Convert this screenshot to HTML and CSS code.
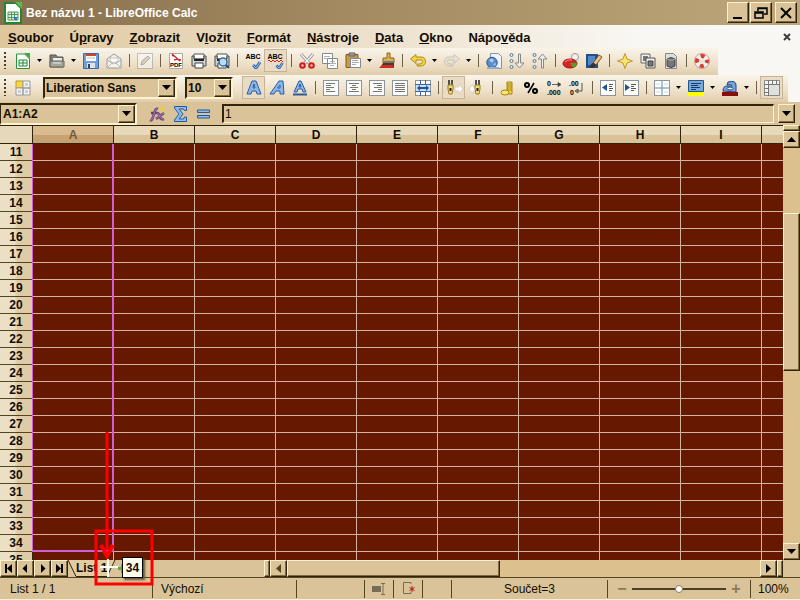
FILE: index.html
```html
<!DOCTYPE html>
<html lang="cs">
<head>
<meta charset="utf-8">
<title>Bez názvu 1 - LibreOffice Calc</title>
<link rel="stylesheet" href="styles.css">
</head>
<body>
<svg class="defs" aria-hidden="true">
  <defs>
    <symbol id="down" viewBox="0 0 9 5"><path d="M0 0h9L4.500 5z"/></symbol>
    <symbol id="caret" viewBox="0 0 5 3"><path d="M0 0h5L2.500 3z"/></symbol>
    <symbol id="page" viewBox="0 0 16 16"><rect x="0.500" y="0.500" width="15" height="15" fill="#fcfcf8" stroke="#8e949c"/></symbol>
    <symbol id="printer" viewBox="0 0 16 16"><path d="M3 1h10v5H3z" fill="#fff" stroke="#555"/><path d="M1 3h2v3h10V3h2v10H1z" fill="#d3d5d3" stroke="#4a4c4c"/><path d="M3 6h10v2H3z" fill="#222"/><path d="M4 10h8v5H4z" fill="#fff" stroke="#444"/></symbol>
    <symbol id="tick" viewBox="0 0 9 8"><path d="M1 4l3 3 4-6" fill="none" stroke="#2f68b0" stroke-width="3"/><path d="M1 4l3 3 4-6" fill="none" stroke="#98c4f0"/></symbol>
    <symbol id="pen" viewBox="0 0 16 16"><path d="M5 0h2v5H5zM8 0h2v5H8z" fill="#505050"/><path d="M5 5h5v4l-1 5H6L5 9z" fill="#f4dd78" stroke="#9a7c20"/><path d="M7.500 8v3" stroke="#222" stroke-width="2"/></symbol>
  </defs>
</svg>
<div class="app">
  <header class="titlebar">
    <svg class="logo" viewBox="0 0 18 22"><path d="M1 1h11l5 5v15H1z" fill="#fff" stroke="#28852f" stroke-width="2"/><path d="M11 0h7v7z" fill="#54c044"/><path d="M4 10h10v8H4z" fill="#dfeee0" stroke="#4c9a54"/><path d="M4 12.500h10M4 15.500h10M7.500 10v8M10.500 10v8" stroke="#4c9a54"/><path d="M10 15h3v3h-3z" fill="#3974a8"/></svg>
    <h1>Bez názvu 1 - LibreOffice Calc</h1>
    <div class="window-buttons">
      <button class="raised" aria-label="Minimalizovat"><svg viewBox="0 0 16 16"><path d="M3 13h9" stroke="#000" stroke-width="2"/></svg></button>
      <button class="raised" aria-label="Obnovit"><svg viewBox="0 0 16 16"><path d="M5 6V3h9v6h-3M5 3.500h9M2 7h8v6H2zM2 8h8" fill="none" stroke="#000" stroke-width="1.500"/></svg></button>
      <button class="raised close" aria-label="Zavřít"><svg viewBox="0 0 16 16"><path d="M3 3l10 10M13 3L3 13" stroke="#000" stroke-width="2"/></svg></button>
    </div>
  </header>

  <div class="bars">
    <nav class="menubar">
      <a href="#"><u>S</u>oubor</a><a href="#">Ú<u>p</u>ravy</a><a href="#"><u>Z</u>obrazit</a><a href="#">V<u>l</u>ožit</a><a href="#"><u>F</u>ormát</a><a href="#"><u>N</u>ástroje</a><a href="#"><u>D</u>ata</a><a href="#"><u>O</u>kno</a><a href="#">Nápo<u>v</u>ěda</a>
      <button class="doc-close" aria-label="Zavřít dokument"><svg viewBox="0 0 8 8"><path d="M1 1l6 6M7 1L1 7" stroke="#3c3c3c" stroke-width="2"/></svg></button>
    </nav>

    <div class="toolbar">
      <i class="grip"></i>
      <button class="tool" aria-label="Nový"><svg viewBox="0 0 16 16"><path d="M1.500 1h8l5 5v9.500h-13z" fill="#fff" stroke="#28943a"/><path d="M9 0h6v6z" fill="#3aad3e"/><path d="M4 7h8v6H4z" fill="#fff" stroke="#1e8a2e"/><path d="M4 10h8M8 7v6" stroke="#1e8a2e"/></svg></button>
      <button class="more" aria-label="Nový – další"><svg><use href="#caret"/></svg></button>
      <button class="tool" aria-label="Otevřít"><svg viewBox="0 0 16 16"><path d="M1 2h6l1 2h6v10H1z" fill="#7b7c72" stroke="#56574f"/><path d="M4 5h9v4H4z" fill="#eee"/><path d="M1 8h14v6H1z" fill="#a5a598" stroke="#66675e"/><path d="M4 10h8" stroke="#eee"/></svg></button>
      <button class="more" aria-label="Otevřít – další"><svg><use href="#caret"/></svg></button>
      <button class="tool" aria-label="Uložit"><svg viewBox="0 0 16 16"><path d="M0.500 0.500h15v15h-15z" fill="#6f9fd8" stroke="#3c6aa8"/><path d="M3 1h10v7H3z" fill="#fff"/><path d="M3 1h10v2H3z" fill="#d8402c"/><path d="M4 5h8" stroke="#bbb"/><path d="M4 10h8v5H4z" fill="#dfe3e8"/><path d="M5 11h2v4H5z" fill="#345"/></svg></button>
      <button class="tool" aria-label="E-mail"><svg viewBox="0 0 16 16"><path d="M1 6l7-5 7 5v9H1z" fill="#f4f4f0" stroke="#9b9b93"/><path d="M1 15l5-5h4l5 5M1 7l6 4M15 7l-6 4" fill="none" stroke="#b4b4ac"/><path d="M4 5h8v3l-4 2-4-2z" fill="#fff" stroke="#bbb"/></svg></button>
      <i class="sep"></i>
      <button class="tool faded" aria-label="Upravit"><svg viewBox="0 0 16 16"><use href="#page"/><path d="M4 12l1-4 6-5 2 2-6 6z" fill="#bbb" stroke="#777"/></svg></button>
      <i class="sep"></i>
      <button class="tool" aria-label="Export do PDF"><svg viewBox="0 0 16 16"><path d="M1.500 0.500h13v15h-13z" fill="#fff" stroke="#b0a8a0"/><path d="M4 1l8 7M6 7l3-1 4 1M4 2l2 1" fill="none" stroke="#d02828" stroke-width="1.500"/><text x="8" y="14" class="t-pdf">PDF</text></svg></button>
      <button class="tool" aria-label="Tisk"><svg><use href="#printer"/></svg></button>
      <button class="tool" aria-label="Náhled"><svg viewBox="0 0 16 16"><use href="#printer"/><circle cx="9" cy="9" r="4" fill="#bcdcf4" stroke="#3b6c9c" stroke-width="1.500"/><path d="M12 12l3 3" stroke="#244c74" stroke-width="2"/></svg></button>
      <i class="sep"></i>
      <button class="tool" aria-label="Kontrola pravopisu"><svg viewBox="0 0 16 16"><text x="8" y="6" class="t-abc">ABC</text><use href="#tick" x="7" y="8" width="9" height="8"/></svg></button>
      <button class="tool on" aria-label="Automatická kontrola"><svg viewBox="0 0 16 16"><text x="7" y="6" class="t-abc">ABC</text><path d="M0 8l1-1 2 2 2-2 2 2 2-2 2 2 2-2 2 2" fill="none" stroke="#d22"/><use href="#tick" x="7" y="9" width="9" height="7"/></svg></button>
      <i class="sep"></i>
      <button class="tool" aria-label="Vyjmout"><svg viewBox="0 0 16 16"><path d="M2 1l8 9M14 1l-8 9" stroke="#8c9094" stroke-width="3"/><path d="M2 1l8 9M14 1l-8 9" stroke="#f4f4f4" stroke-width="1.300"/><circle cx="3.500" cy="12.500" r="2.300" fill="#fbb" stroke="#cc1c1c" stroke-width="2"/><circle cx="12.500" cy="12.500" r="2.300" fill="#fbb" stroke="#cc1c1c" stroke-width="2"/></svg></button>
      <button class="tool" aria-label="Kopírovat"><svg viewBox="0 0 16 16"><path d="M0.500 0.500h10v10h-10zM5.500 5.500h10v10h-10z" fill="#fff" stroke="#85898c"/><path d="M2 3.500h6M2 5.500h3M8 8.500h5M8 10.500h6M8 12.500h4" stroke="#b0b0b0"/></svg></button>
      <button class="tool" aria-label="Vložit"><svg viewBox="0 0 16 16"><path d="M1 1.500h12v13H1z" fill="#c99a4c" stroke="#7c5c24"/><path d="M4 0h6v3H4z" fill="#999" stroke="#666"/><path d="M5.500 5.500h10v9h-10z" fill="#fff" stroke="#85898c"/><path d="M7 7.500h6M7 9.500h7M7 11.500h4" stroke="#aaa"/></svg></button>
      <button class="more" aria-label="Vložit – další"><svg><use href="#caret"/></svg></button>
      <button class="tool" aria-label="Štětec"><svg viewBox="0 0 16 16"><path d="M8 0h3v5h4v5H4V5h4z" fill="#ddb050" stroke="#8c6420"/><path d="M4 8h11v2H4z" fill="#777"/><path d="M4 10h11v5H1z" fill="#4c3824"/><path d="M0 15l3-3h11l1 3z" fill="#d02c2c"/></svg></button>
      <i class="sep"></i>
      <button class="tool" aria-label="Zpět"><svg viewBox="0 0 16 16"><path d="M0.500 6L6 1.500V4h5q4.500 0 4.500 4.500T10 13H7v-2h3q2.500 0 2.500-2.500T10 7H6v3.500z" fill="#f4d448" stroke="#b08c14"/></svg></button>
      <button class="more" aria-label="Zpět – další"><svg><use href="#caret"/></svg></button>
      <button class="tool faded" aria-label="Znovu"><svg viewBox="0 0 16 16"><path d="M15.500 6L10 1.500V4H5Q0.500 4 0.500 8.500T6 13h3v-2H6q-2.500 0-2.500-2.500T6 7h4v3.500z" fill="#dcdcd4" stroke="#a4a49c"/></svg></button>
      <button class="more" aria-label="Znovu – další"><svg><use href="#caret"/></svg></button>
      <i class="sep"></i>
      <button class="tool" aria-label="Odkaz"><svg viewBox="0 0 16 16"><path d="M4.500 0.500h8l3 3v12h-11z" fill="#eef4fa" stroke="#8494a4"/><circle cx="6" cy="9.500" r="5.200" fill="#5b8cc4" stroke="#2c5890"/><path d="M3 7q3-3 5 0l-2 3zM7 11l3-1-1 3z" fill="#a9cdf0"/><path d="M1 14h12v2H1z" fill="#8fb0d0"/></svg></button>
      <button class="tool" aria-label="Seřadit vzestupně"><svg viewBox="0 0 16 16"><g fill="#e4f0fa" stroke="#54789c"><circle cx="2.500" cy="2" r="1.500"/><circle cx="2.500" cy="8" r="1.500"/><circle cx="2.500" cy="14" r="1.500"/></g><path d="M9.500 1h2v9H15l-4.500 5L6 10h3.500z" fill="#eee" stroke="#888"/></svg></button>
      <button class="tool" aria-label="Seřadit sestupně"><svg viewBox="0 0 16 16"><g fill="#e4f0fa" stroke="#54789c"><circle cx="2.500" cy="2" r="1.500"/><circle cx="2.500" cy="8" r="1.500"/><circle cx="2.500" cy="14" r="1.500"/></g><path d="M9.500 15h2V6H15l-4.500-5L6 6h3.500z" fill="#eee" stroke="#888"/></svg></button>
      <i class="sep"></i>
      <button class="tool" aria-label="Graf"><svg viewBox="0 0 16 16"><circle cx="12" cy="4" r="3.500" fill="#eee" stroke="#999"/><ellipse cx="7" cy="10.500" rx="7" ry="4.500" fill="#d82424" stroke="#981818"/><path d="M7 10h7q0 3-4 4.500z" fill="#48a828"/><path d="M2 9q3-3 7-2" stroke="#f88" fill="none"/></svg></button>
      <button class="tool" aria-label="Kreslení"><svg viewBox="0 0 16 16"><path d="M0 1h12v14H0z" fill="#1e508c"/><path d="M2 3h7v9H2z" fill="#5488c0"/><path d="M7 10l6-8 3 2-6 8z" fill="#eac48c" stroke="#75542c"/><path d="M4 15q0-5 4-5l2 2q-1 3-6 3z" fill="#333"/></svg></button>
      <i class="sep"></i>
      <button class="tool" aria-label="Navigátor"><svg viewBox="0 0 16 16"><path d="M8 0.500l2 5.500 5.500 2-5.500 2-2 5.500L6 10 0.500 8 6 6z" fill="#fae46c" stroke="#b8982c"/></svg></button>
      <button class="tool" aria-label="Galerie"><svg viewBox="0 0 16 16"><path d="M1 1h9v9H1z" fill="#eee" stroke="#666"/><path d="M3 3h5v5H3z" fill="#777"/><path d="M6 5h9v10H6z" fill="#eee" stroke="#555"/><path d="M8 8h5v5H8z" fill="#777" stroke="#444"/></svg></button>
      <button class="tool" aria-label="Zdroje dat"><svg viewBox="0 0 16 16"><path d="M2.500 0.500h8l3 3v12h-11z" fill="#ddd" stroke="#888"/><path d="M4 6q4-3 8 0v7q-4 3-8 0z" fill="#777" stroke="#444"/><path d="M4 6q4 3 8 0" fill="none" stroke="#aaa"/></svg></button>
      <i class="sep"></i>
      <button class="tool" aria-label="Nápověda"><svg viewBox="0 0 16 16"><circle cx="8" cy="8" r="5" fill="none" stroke="#eee" stroke-width="5"/><circle cx="8" cy="8" r="5" fill="none" stroke="#d83c34" stroke-width="4" stroke-dasharray="4 3.850" stroke-dashoffset="2"/><circle cx="8" cy="8" r="7.500" fill="none" stroke="#c08078" stroke-width="0.700"/></svg></button>
    </div>

    <div class="toolbar formatting">
      <i class="grip"></i>
      <button class="tool" aria-label="Styly"><svg viewBox="0 0 16 16"><path d="M1 1h7v7H1z" fill="#fbd63c" stroke="#b89830"/><path d="M8 1h7v7H8zM1 8h7v7H1zM8 8h7v7H8z" fill="#f4f4f4" stroke="#999"/><path d="M10 3h3v3h-3zM3 10h3v3H3zM10 10h3v3h-3z" fill="#ccd"/></svg></button>
      <span class="combo font"><select aria-label="Název písma"><option>Liberation Sans</option></select><span class="drop raised"><svg><use href="#down"/></svg></span></span>
      <span class="combo size"><select aria-label="Velikost písma"><option>10</option></select><span class="drop raised"><svg><use href="#down"/></svg></span></span>
      <button class="tool on" aria-label="Tučné"><svg viewBox="0 0 16 16"><path d="M1 14L6 1h4l5 13h-4l-1-3H6l-1 3zM7 8h2L8 4z" fill="#8ab8ec" stroke="#2c5c9c" fill-rule="evenodd"/></svg></button>
      <button class="tool" aria-label="Kurzíva"><svg viewBox="0 0 16 16"><path d="M1 14L10 1h4l1 13h-4v-3H7l-2 3zM8.500 8H11V5z" fill="#8ab8ec" stroke="#2c5c9c" fill-rule="evenodd"/></svg></button>
      <button class="tool" aria-label="Podtržení"><svg viewBox="0 0 16 16"><path d="M2 12L7 1h2l5 11h-3l-1-3H6l-1 3zM7 7h2L8 4z" fill="#8ab8ec" stroke="#2c5c9c" fill-rule="evenodd"/><path d="M1 14.500h14" stroke="#2c5c9c" stroke-width="2"/></svg></button>
      <i class="sep"></i>
      <button class="tool" aria-label="Vlevo"><svg viewBox="0 0 16 16"><use href="#page"/><path d="M3 3.500h9M3 5.500h5M3 7.500h8M3 9.500h4M3 11.500h9" stroke="#777"/></svg></button>
      <button class="tool" aria-label="Na střed"><svg viewBox="0 0 16 16"><use href="#page"/><path d="M3 3.500h10M6 5.500h4M4 7.500h8M6 9.500h4M3 11.500h10" stroke="#777"/></svg></button>
      <button class="tool" aria-label="Vpravo"><svg viewBox="0 0 16 16"><use href="#page"/><path d="M4 3.500h9M8 5.500h5M5 7.500h8M9 9.500h4M4 11.500h9" stroke="#777"/></svg></button>
      <button class="tool" aria-label="Do bloku"><svg viewBox="0 0 16 16"><use href="#page"/><path d="M3 3.500h10M3 5.500h10M3 7.500h10M3 9.500h10M3 11.500h10" stroke="#777"/></svg></button>
      <button class="tool" aria-label="Sloučit buňky"><svg viewBox="0 0 16 16"><use href="#page"/><path d="M0 4.500h16M0 11.500h16M5.500 0v4M10.500 0v4M5.500 12v4M10.500 12v4" stroke="#3c6494"/><path d="M1 5h14v6H1z" fill="#c8e0f8"/><path d="M2 8l3-3v2h6V5l3 3-3 3V9H5v2z" fill="#245490"/></svg></button>
      <i class="sep"></i>
      <button class="tool on" aria-label="Zleva doprava"><svg viewBox="0 0 16 16"><path d="M9 7h4V4l4 5-4 5v-3H9z" fill="#fff" stroke="#d8d0c0"/><use href="#pen" x="-3" width="16" height="16"/></svg></button>
      <button class="tool" aria-label="Zprava doleva"><svg viewBox="0 0 16 16"><path d="M7 7H4V4L0 9l4 5v-3h3z" fill="#fff" stroke="#d8d0c0"/><use href="#pen" x="1" width="16" height="16"/></svg></button>
      <i class="sep"></i>
      <button class="tool" aria-label="Měna"><svg viewBox="0 0 16 16"><path d="M7 2h5v12H7z" fill="#f4d444" stroke="#a88414"/><path d="M7 4h5M7 6h5M7 8h5M7 10h5" stroke="#a88414"/><ellipse cx="5" cy="12.500" rx="4" ry="2.500" fill="#fae870" stroke="#a88414"/></svg></button>
      <button class="tool" aria-label="Procenta"><svg viewBox="0 0 16 16"><g fill="none" stroke="#000" stroke-width="2"><circle cx="4" cy="5" r="2"/><circle cx="12" cy="11" r="2"/></g><path d="M11 3L5 13" stroke="#000" stroke-width="1.500"/></svg></button>
      <button class="tool" aria-label="Přidat desetinné místo"><svg viewBox="0 0 16 16"><text x="1" y="6" class="t-num">0</text><path d="M6 4.500h8M12 2.500v4l3-2z" stroke="#444" fill="#444" stroke-width="0.800"/><text x="1" y="15" class="t-num">.000</text></svg></button>
      <button class="tool" aria-label="Odebrat desetinné místo"><svg viewBox="0 0 16 16"><text x="0" y="6" class="t-num">.00</text><text x="1" y="15" class="t-num">0</text><path d="M13 3v8H7M9 9v4l-3-2z" fill="none" stroke="#555"/></svg></button>
      <i class="sep"></i>
      <button class="tool" aria-label="Zmenšit odsazení"><svg viewBox="0 0 16 16"><use href="#page"/><path d="M7 4v7L2 7.500z" fill="#245490"/><path d="M9 4.500h4M9 6.500h3M9 8.500h4M9 10.500h3" stroke="#555"/></svg></button>
      <button class="tool" aria-label="Zvětšit odsazení"><svg viewBox="0 0 16 16"><use href="#page"/><path d="M2 4v7l5-3.500z" fill="#245490"/><path d="M8 4.500h5M8 6.500h3M8 8.500h5M8 10.500h3" stroke="#555"/></svg></button>
      <i class="sep"></i>
      <button class="tool" aria-label="Ohraničení"><svg viewBox="0 0 16 16"><use href="#page"/><path d="M1 8h14M8 1v14" stroke="#5c8cbc"/><path d="M2 4h4M10 4h4M2 12h4M10 12h4" stroke="#ccd8e4"/></svg></button>
      <button class="more" aria-label="Ohraničení – další"><svg><use href="#caret"/></svg></button>
      <button class="tool" aria-label="Barva pozadí"><svg viewBox="0 0 16 16"><path d="M0.500 0.500h15v11h-15z" fill="#78a8d8" stroke="#24548c"/><path d="M3 3.500h10M3 5.500h7M3 7.500h9M3 9.500h5" stroke="#163c68"/><path d="M0 12h16v4H0z" fill="#ff0"/></svg></button>
      <button class="more" aria-label="Barva pozadí – další"><svg><use href="#caret"/></svg></button>
      <button class="tool" aria-label="Barva písma"><svg viewBox="0 0 16 16"><path d="M1 11Q1 6 5 6h5q0-2-5-1l1-3q8-2 8 3v7z" fill="#78a4dc" stroke="#204880"/><ellipse cx="8" cy="8.500" rx="3" ry="1.500" fill="#e4eef8" stroke="#204880"/><path d="M0 12h16v4H0z" fill="#8c0c0c"/></svg></button>
      <button class="more" aria-label="Barva písma – další"><svg><use href="#caret"/></svg></button>
      <i class="sep"></i>
      <button class="tool on" aria-label="Ukotvit řádky a sloupce"><svg viewBox="0 0 16 16"><path d="M0.500 0.500h15v15h-15z" fill="#f4f4f0" stroke="#888"/><path d="M0 4.500h16M4.500 0v16M8.500 0v5M12.500 0v5M0 8.500h4M0 12.500h4" stroke="#777"/><path d="M5 5h10v10H5z" fill="#e0e0dc"/></svg></button>
    </div>
  </div>

  <div class="formulabar">
    <span class="namebox"><input aria-label="Pole názvu" value="A1:A2"><button class="drop raised" aria-label="Seznam oblastí"><svg><use href="#down"/></svg></button></span>
    <div class="fx-tools">
      <button class="tool" aria-label="Průvodce funkcí"><svg viewBox="0 0 16 16"><path d="M13 0l1 2 2 1-2 1-1 2-1-2-2-1 2-1z" fill="#f4cc38"/><path d="M1 14q2 1 3-3l2-6q1-3 3-2M2 7h6M8 7q2 0 3 4 1 3 4 2M15 7L7 13" fill="none" stroke="#684070" stroke-width="2.600"/><path d="M1 14q2 1 3-3l2-6q1-3 3-2M8 7q2 0 3 4 1 3 4 2M15 7L7 13" fill="none" stroke="#b48cbc" stroke-width="0.800"/></svg></button>
      <button class="tool" aria-label="Součet"><svg viewBox="0 0 16 16"><path d="M2.500 0.500h12v4h-2l-1-1.500H7l4 5-4 5h4.500l1-2h2v4.500h-12V14L7 8 2.500 2z" fill="#8abcec" stroke="#24589c"/></svg></button>
      <button class="tool" aria-label="Funkce"><svg viewBox="0 0 16 16"><path d="M2.500 4h12v2.500h-12zM2.500 9.500h12V12h-12z" fill="#8abcec" stroke="#24589c"/></svg></button>
    </div>
    <input class="formula" aria-label="Vstupní řádek" value="1">
    <button class="expand raised" aria-label="Rozbalit vstupní řádek"><svg><use href="#down"/></svg></button>
  </div>

  <main class="sheet">
    <div class="cells" id="cells">
      <table aria-label="List 1"><thead><tr id="heads"><th class="corner"></th></tr></thead><tbody id="rows"></tbody></table>
      <div class="selection"></div>
    </div>
    <div class="vscroll">
      <i class="splitter raised"></i>
      <button class="arrow raised" aria-label="Nahoru"><svg class="up"><use href="#down"/></svg></button>
      <div class="track"><i class="thumb raised"></i></div>
      <button class="arrow raised" aria-label="Dolů"><svg><use href="#down"/></svg></button>
    </div>
  </main>

  <div class="tabbar">
    <div class="tabs">
      <button class="step raised" aria-label="První list"><svg viewBox="0 0 9 9"><path d="M1 0h2v9H1zM8 0v9L3 4.500z"/></svg></button>
      <button class="step raised" aria-label="Předchozí list"><svg viewBox="0 0 9 9"><path d="M6 0v9L1.500 4.500z"/></svg></button>
      <button class="step raised" aria-label="Další list"><svg viewBox="0 0 9 9"><path d="M3 0v9l4.500-4.500z"/></svg></button>
      <button class="step raised" aria-label="Poslední list"><svg viewBox="0 0 9 9"><path d="M1 0v9l5-4.500zM6 0h2v9H6z"/></svg></button>
      <a class="tab" href="#"><svg viewBox="0 0 48 17" preserveAspectRatio="none"><path d="M0 0l8 16.500h31L47 0" fill="#e2cda3" stroke="#30240c"/></svg><span>List 1</span></a>
      <button class="add" aria-label="Přidat list"><svg viewBox="0 0 9 9"><path d="M3 0h3v3h3v3H6v3H3V6H0V3h3z" fill="#62a83c"/></svg></button>
      <div class="annotation">
        <svg viewBox="0 0 60 156"><path d="M13 2v118" stroke="#f00" stroke-width="3"/><path d="M7 115l6 11 6-11" fill="none" stroke="#f00" stroke-width="4"/><rect x="2" y="101" width="56" height="53" fill="none" stroke="#f00" stroke-width="3"/><path d="M14 129v18M6 137h18" stroke="#fff" stroke-width="2"/></svg>
        <span class="tip">34</span>
      </div>
    </div>
    <div class="hscroll">
      <i class="splitter raised"></i>
      <button class="arrow raised dim" aria-label="Vlevo"><svg class="left"><use href="#down"/></svg></button>
      <div class="track"><i class="thumb raised"></i></div>
      <button class="arrow raised" aria-label="Vpravo"><svg class="right"><use href="#down"/></svg></button>
      <i class="splitter raised"></i>
    </div>
    <i class="tab-end"></i>
  </div>

  <footer class="status">
    <span class="lead">List 1 / 1</span>
    <span>Výchozí</span>
    <span></span>
    <span class="mid"><svg viewBox="0 0 16 16"><path d="M1 5h9v6H1z" fill="#796c54"/><path d="M10 2.500h4M12 3v10M10 13.500h4" stroke="#796c54"/></svg></span>
    <span class="mid"><svg viewBox="0 0 16 16"><path d="M11 3V1.500H3.500v11H11V11" fill="none" stroke="#796c54"/><path d="M12 5v6M9.500 6.500l5 3M14.500 6.500l-5 3" stroke="#b01c1c"/></svg></span>
    <span></span>
    <span class="mid">Součet=3</span>
    <span class="zoom"><button aria-label="Zmenšit">−</button><input type="range" aria-label="Měřítko" min="0" max="100" value="50"><button aria-label="Zvětšit">+</button></span>
    <span class="percent">100%</span>
  </footer>
</div>
<script src="sheet.js"></script>
</body>
</html>
```
FILE: styles.css
```css
:root {
  --face: #dac398;
  --light: #fff2cc;
  --dark: #30240c;
  --grid: #661900;
}
* { box-sizing: border-box; }
body {
  margin: 0;
  font: 12px/16px "Liberation Sans", Arial, sans-serif;
  color: #120c00;
  background: var(--face);
}
button, input, select { font: inherit; color: inherit; margin: 0; padding: 0; border: 0; background: none; border-radius: 0; outline: 0; }
button { display: flex; align-items: center; justify-content: center; flex: none; }
a { color: inherit; text-decoration: none; }
svg { display: block; flex: none; }
.defs { position: absolute; width: 0; height: 0; }
.app { display: flex; flex-direction: column; height: 100vh; overflow: hidden; }

.raised {
  background: var(--face);
  border: 1px solid;
  border-color: var(--light) var(--dark) var(--dark) var(--light);
  box-shadow: inset -1px -1px #806a40;
}

.titlebar { flex: none; display: flex; align-items: center; height: 25px; padding: 0 3px 0 4px; background: linear-gradient(90deg, #87704e, #a48b62 45%, #bda77a); }
.logo { width: 18px; height: 22px; }
.titlebar h1 { flex: 1; margin: 0 0 0 4px; font-size: 12px; color: #fff; }
.window-buttons { display: flex; gap: 1px; }
.window-buttons button { width: 22px; height: 21px; }
.window-buttons .close { margin-left: 2px; }
.window-buttons svg { width: 16px; height: 16px; }

.bars { flex: none; background: linear-gradient(90deg, #dfc79c, #eee3d0 50%, #f9f7f3 80%); }
.menubar { display: flex; align-items: center; gap: 16px; height: 23px; padding: 2px 8px 0; font-weight: bold; font-size: 13px; }
.doc-close { width: 10px; height: 10px; margin: 0 0 2px auto; }
.doc-close svg { width: 8px; height: 8px; }

.toolbar { display: flex; align-items: center; width: fit-content; height: 27px; padding: 0 5px 2px 0; background: linear-gradient(#f9f4ea, #eee0c8 60%, #e0ccaa); }
.grip { width: 3px; height: 17px; margin: 0 4px; background: repeating-linear-gradient(#4a3c28 0 2px, transparent 2px 4px); background-size: 2px 100%; background-repeat: no-repeat; }
.tool { width: 23px; height: 23px; }
.tool svg { width: 16px; height: 16px; overflow: visible; }
.tool.on { border: 1px solid #c5b499; background: #e9dbc4; }
.faded { opacity: .5; }
.more { width: 11px; height: 23px; }
.more svg { width: 5px; height: 3px; }
.sep { width: 8px; height: 13px; background: linear-gradient(#6c6048, #6c6048) center / 1px 100% no-repeat; }
.t-pdf { font: bold 6px "Liberation Sans", sans-serif; text-anchor: middle; }
.t-abc { font: bold 7px "Liberation Sans", sans-serif; text-anchor: middle; }
.t-num { font: bold 7px "Liberation Sans", sans-serif; }

.combo { display: grid; align-items: center; height: 22px; border: 2px solid; border-color: var(--dark) var(--light) var(--light) var(--dark); background: var(--face); font-weight: bold; }
.combo select { grid-area: 1 / 1; width: 100%; height: 18px; padding-left: 1px; appearance: none; }
.combo .drop { grid-area: 1 / 1; justify-self: end; pointer-events: none; }
.drop { display: flex; align-items: center; justify-content: center; width: 17px; height: 18px; }
.drop svg, .expand svg, .arrow svg { width: 9px; height: 5px; }
.font { width: 134px; margin-left: 9px; }
.size { width: 48px; margin: 0 9px 0 8px; }

.formulabar { flex: none; display: flex; align-items: center; height: 23px; padding-right: 5px; }
.namebox { display: flex; align-items: center; width: 137px; height: 22px; border: 2px solid; border-color: var(--dark) var(--light) var(--light) var(--dark); border-left-width: 1px; }
.namebox input { flex: 1; min-width: 0; padding-left: 2px; font-weight: bold; }
.fx-tools { display: flex; margin: 0 8px; }
.formula { flex: 1; min-width: 0; height: 19px; padding-left: 1px; border: 1px solid; border-width: 2px 1px 1px 2px; border-color: var(--dark) var(--light) var(--light) var(--dark); }
.expand { width: 17px; height: 19px; margin-left: 4px; }

.sheet { flex: 1; display: flex; min-height: 0; }
.cells { position: relative; flex: 1; min-width: 0; overflow: hidden; background: var(--grid); border-top: 1px solid var(--dark); }
table { table-layout: fixed; width: max-content; border-collapse: separate; border-spacing: 0; }
th, td { height: 17px; padding: 0; line-height: 16px; overflow: hidden; }
td { border-right: 1px solid #d2b3a3; border-bottom: 1px solid #d2b3a3; }
thead th { width: 81px; height: 18px; border-right: 1px solid var(--dark); border-bottom: 1px solid var(--dark); background: linear-gradient(#e9d9bb 50%, #d9c297 55%); }
thead .corner { width: 33px; background: #e6d8ba; }
thead .active { color: #705a3c; background: linear-gradient(#dabb8d 50%, #c7a172 55%); }
tbody th { border-right: 1px solid var(--dark); border-bottom: 1px solid #54451f; background: linear-gradient(90deg, #ebdfc6 45%, #dfcba5 55%); }
.selection { position: absolute; left: 32px; top: 18px; width: 82px; height: 408px; border: 2px solid #cf62d3; border-width: 0 2px 2px 1px; }

.vscroll { flex: none; display: flex; flex-direction: column; width: 17px; background: #dcc18e; }
.vscroll .splitter { height: 6px; }
.vscroll .arrow { width: 17px; height: 17px; }
.vscroll .track { flex: 1; display: flex; flex-direction: column; }
.vscroll .thumb { height: 40%; margin-top: 65px; }
.up { transform: rotate(180deg); }
.left { transform: rotate(90deg); }
.right { transform: rotate(-90deg); }

.tabbar { flex: none; display: flex; height: 18px; border-bottom: 1px solid #54451f; background: var(--face); }
.tabs { position: relative; display: flex; width: 33%; }
.step { width: 17px; height: 17px; }
.step svg, .add svg { width: 9px; height: 9px; }
.tab { display: grid; width: 48px; height: 17px; font-weight: bold; }
.tab svg, .tab span { grid-area: 1 / 1; }
.tab svg { width: 48px; height: 17px; }
.tab span { padding-left: 8px; white-space: nowrap; }
.add { width: 12px; height: 17px; }
.annotation { position: absolute; left: 94px; bottom: -9px; width: 60px; height: 156px; pointer-events: none; }
.annotation svg { width: 60px; height: 156px; }
.tip { position: absolute; left: 28px; bottom: 8px; width: 21px; height: 21px; border: 1px solid #000; background: #fffff0; box-shadow: 2px 2px 2px #655538; font-weight: bold; line-height: 20px; text-align: center; }
.hscroll { flex: 1; display: flex; min-width: 0; background: #dcc18e; }
.hscroll .splitter { width: 6px; height: 17px; }
.hscroll .arrow { width: 17px; height: 17px; }
.dim { fill: #54451f; }
.hscroll .track { flex: 1; display: flex; }
.hscroll .thumb { width: 45%; height: 17px; }
.tab-end { width: 17px; }

.status { flex: none; display: grid; grid-template-columns: 153fr 144fr 68px 29px 29px 29px 156fr 143px 49px; align-items: center; height: 22px; padding: 2px 0; border-bottom: 1px solid var(--light); }
.status > span { display: flex; align-items: center; height: 18px; padding-left: 8px; border-right: 1px solid #54451f; white-space: nowrap; }
.status > .lead { padding-left: 10px; }
.status > .mid { padding: 0; justify-content: center; }
.status > .percent { padding-left: 7px; border: 0; }
.status svg { width: 16px; height: 16px; }
.status > .zoom { padding: 0 6px; }
.zoom button { width: 16px; height: 16px; font-size: 16px; font-weight: bold; color: #8a7a58; }
.zoom input { flex: 1; min-width: 0; height: 12px; margin: 0 2px; appearance: none; background: linear-gradient(#4c4028, #4c4028) center / 100% 2px no-repeat; }
.zoom input::-webkit-slider-thumb { appearance: none; width: 8px; height: 8px; border: 1px solid #8a7a58; border-radius: 50%; background: #fff; }
```
FILE: sheet.js
```js
const area = document.getElementById('cells');
const heads = document.getElementById('heads');
const body = document.getElementById('rows');
const firstRow = 11;
const columns = Math.min(26, Math.ceil((area.clientWidth - 33) / 81));
const rows = Math.ceil((area.clientHeight - 18) / 17);

for (let c = 0; c < columns; c++) {
  const th = document.createElement('th');
  // The last column is only partly in view, so its centred letter is left out.
  const whole = 33 + (c + 1) * 81 <= area.clientWidth;
  th.textContent = whole ? String.fromCharCode(65 + c) : '';
  if (c === 0) th.className = 'active';
  heads.append(th);
}
for (let r = 0; r < rows; r++) {
  const tr = document.createElement('tr');
  const th = document.createElement('th');
  th.textContent = firstRow + r;
  tr.append(th);
  for (let c = 0; c < columns; c++) tr.append(document.createElement('td'));
  body.append(tr);
}
```
